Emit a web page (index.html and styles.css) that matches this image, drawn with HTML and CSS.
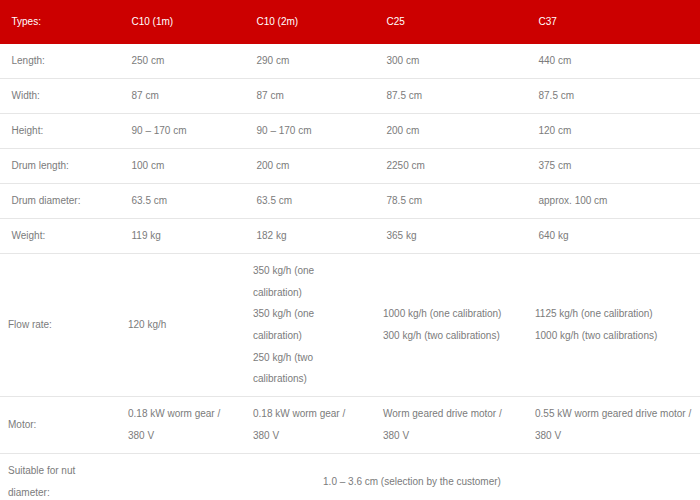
FILE: index.html
```html
<!DOCTYPE html>
<html lang="en">
<head>
<meta charset="utf-8">
<title>Types</title>
<link rel="stylesheet" href="styles.css">
</head>
<body>
<div class="page">
  <table class="specs specs-top">
    <colgroup>
      <col class="c1"><col class="c2"><col class="c3"><col class="c4"><col class="c5">
    </colgroup>
    <thead>
      <tr class="head">
        <th>Types:</th><th>C10 (1m)</th><th>C10 (2m)</th><th>C25</th><th>C37</th>
      </tr>
    </thead>
    <tbody>
      <tr><td>Length:</td><td>250 cm</td><td>290 cm</td><td>300 cm</td><td>440 cm</td></tr>
      <tr><td>Width:</td><td>87 cm</td><td>87 cm</td><td>87.5 cm</td><td>87.5 cm</td></tr>
      <tr><td>Height:</td><td>90 – 170 cm</td><td>90 – 170 cm</td><td>200 cm</td><td>120 cm</td></tr>
      <tr><td>Drum length:</td><td>100 cm</td><td>200 cm</td><td>2250 cm</td><td>375 cm</td></tr>
      <tr><td>Drum diameter:</td><td>63.5 cm</td><td>63.5 cm</td><td>78.5 cm</td><td>approx. 100 cm</td></tr>
      <tr><td>Weight:</td><td>119 kg</td><td>182 kg</td><td>365 kg</td><td>640 kg</td></tr>
    </tbody>
  </table>
  <table class="specs specs-bottom">
    <colgroup>
      <col class="c1"><col class="c2"><col class="c3"><col class="c4"><col class="c5">
    </colgroup>
    <tbody>
      <tr>
        <td>Flow rate:</td>
        <td>120 kg/h</td>
        <td>350 kg/h (one calibration)<br>350 kg/h (one calibration)<br>250 kg/h (two calibrations)</td>
        <td>1000 kg/h (one calibration)<br>300 kg/h (two calibrations)</td>
        <td>1125 kg/h (one calibration)<br>1000 kg/h (two calibrations)</td>
      </tr>
      <tr>
        <td>Motor:</td>
        <td>0.18 kW worm gear / 380 V</td>
        <td>0.18 kW worm gear / 380 V</td>
        <td>Worm geared drive motor / 380 V</td>
        <td>0.55 kW worm geared drive motor / 380 V</td>
      </tr>
      <tr class="last">
        <td>Suitable for nut diameter:</td>
        <td colspan="4" class="center">1.0 – 3.6 cm (selection by the customer)</td>
      </tr>
    </tbody>
  </table>
</div>
</body>
</html>
```

FILE: styles.css
```css
html, body {
  margin: 0;
  padding: 0;
  background: #ffffff;
}

.page {
  width: 700px;
  font-family: "Liberation Sans", Arial, sans-serif;
  font-size: 10px;
  color: #7b7b7b;
}

.specs {
  width: 700px;
  table-layout: fixed;
  border-collapse: collapse;
  border-spacing: 0;
}

.specs .c1 { width: 120px; }
.specs .c2 { width: 125px; }
.specs .c3 { width: 130px; }
.specs .c4 { width: 152px; }
.specs .c5 { width: 173px; }

.specs th,
.specs td {
  text-align: left;
  vertical-align: middle;
  font-weight: normal;
  line-height: 21.7px;
  padding: 6.1px 15px 6.1px 11.5px;
}

.specs td:last-child,
.specs th:last-child {
  padding-right: 4px;
}

.specs tbody tr {
  border-bottom: 1px solid #e6e6e6;
}

.head {
  background: #cc0000;
}

.head th {
  color: #ffffff;
  padding-top: 11.3px;
  padding-bottom: 11.4px;
}

.specs-bottom th,
.specs-bottom td {
  padding-left: 8px;
}

.specs-bottom tr.last {
  border-bottom: none;
}

.specs-bottom td.center {
  text-align: center;
}
```
